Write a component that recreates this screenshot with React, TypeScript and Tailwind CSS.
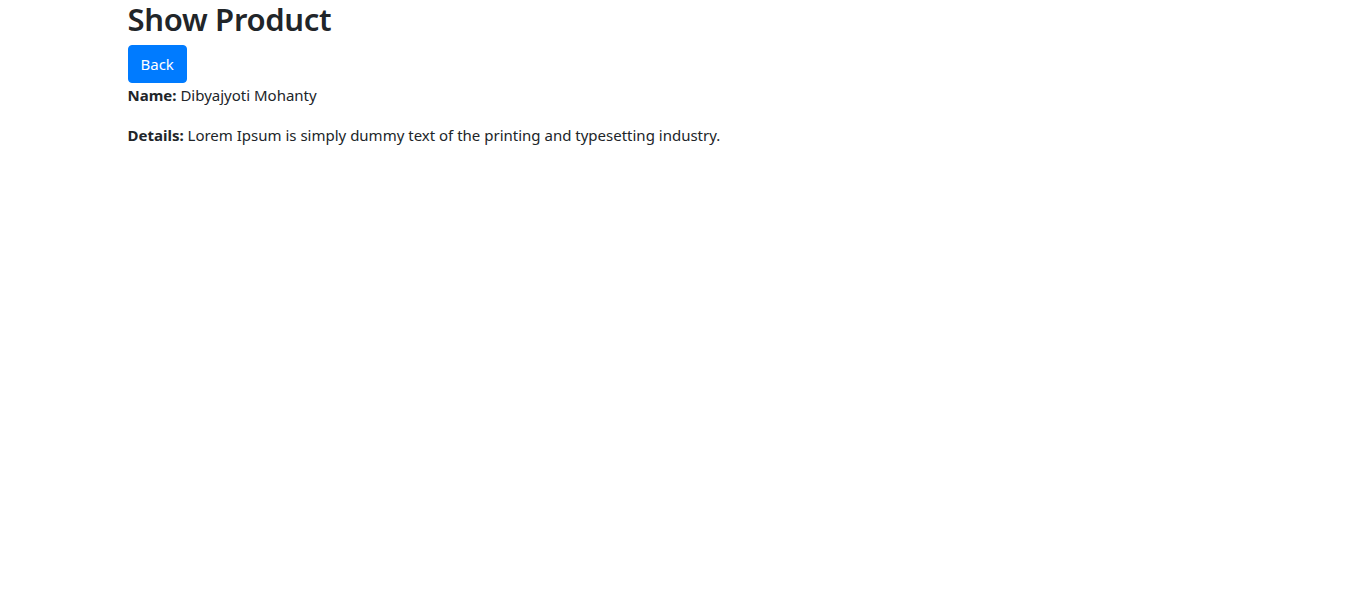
import React from 'react';

export default function App() {
  return (
    <div className="min-h-screen bg-white text-[#212529] text-[15px] leading-6" style={{ fontFamily: '"Segoe UI", "Noto Sans", sans-serif' }}>
      <div className="max-w-[1140px] mx-auto pl-[16px] pr-[15px]">
        <h2 className="text-[31px] leading-[38px] font-semibold tracking-[-0.3px] mb-[7px]">Show Product</h2>
        <button className="bg-[#007bff] text-white border border-[#007bff] rounded px-3 py-[6px] text-[15px] leading-6">
          Back
        </button>
        <p className="mb-4">
          <strong className="font-bold">Name:</strong> Dibyajyoti Mohanty
        </p>
        <p className="mb-4">
          <strong className="font-bold">Details:</strong> Lorem Ipsum is simply dummy text of the printing and typesetting industry.
        </p>
      </div>
    </div>
  );
}
